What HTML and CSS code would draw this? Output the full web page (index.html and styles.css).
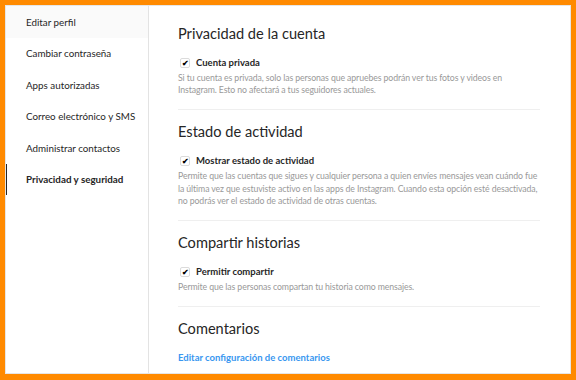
FILE: index.html
```html
<!DOCTYPE html>
<html lang="es">
<head>
<meta charset="utf-8">
<title>Privacidad y seguridad</title>
<link rel="stylesheet" href="styles.css">
</head>
<body>
<div class="frame">
  <div class="box">
    <nav class="side">
      <a class="item hover">Editar perfil</a>
      <a class="item">Cambiar contraseña</a>
      <a class="item">Apps autorizadas</a>
      <a class="item">Correo electrónico y SMS</a>
      <a class="item">Administrar contactos</a>
      <a class="item active">Privacidad y seguridad</a>
    </nav>
    <main class="main">
      <section class="sec">
        <h2 class="title">Privacidad de la cuenta</h2>
        <label class="check"><span class="box-check">✔</span>Cuenta privada</label>
        <p class="desc">Si tu cuenta es privada, solo las personas que apruebes podrán ver tus fotos y videos en Instagram. Esto no afectará a tus seguidores actuales.</p>
      </section>
      <section class="sec">
        <h2 class="title">Estado de actividad</h2>
        <label class="check"><span class="box-check">✔</span>Mostrar estado de actividad</label>
        <p class="desc">Permite que las cuentas que sigues y cualquier persona a quien envíes mensajes vean cuándo fue la última vez que estuviste activo en las apps de Instagram. Cuando esta opción esté desactivada, no podrás ver el estado de actividad de otras cuentas.</p>
      </section>
      <section class="sec">
        <h2 class="title">Compartir historias</h2>
        <label class="check"><span class="box-check">✔</span>Permitir compartir</label>
        <p class="desc">Permite que las personas compartan tu historia como mensajes.</p>
      </section>
      <section class="sec last">
        <h2 class="title">Comentarios</h2>
        <a class="link">Editar configuración de comentarios</a>
      </section>
    </main>
  </div>
</div>
</body>
</html>
```
FILE: styles.css
```css
* { box-sizing: border-box; }
html, body { margin: 0; padding: 0; }
body {
  background: #ff8a00;
  font-family: Lato, "Open Sans", sans-serif;
  color: #262626;
}
.frame {
  width: 576px;
  height: 380px;
  padding: 5px 5px 6px 5px;
}
.box {
  width: 566px;
  height: 369px;
  background: #fff;
  border: 1px solid #e6e6e6;
  display: flex;
  overflow: hidden;
}
.side {
  width: 143px;
  flex: none;
  border-right: 1px solid #e3e3e3;
  display: flex;
  flex-direction: column;
}
.item {
  display: flex;
  align-items: center;
  height: 31.5px;
  padding-left: 19px;
  font-size: 9.8px;
  white-space: nowrap;
  color: #262626;
  border-left: 2px solid transparent;
  margin-left: -1px;
}
.item.hover { background: #fafafa; }
.item.active {
  border-left-color: #262626;
  font-weight: 700;
}
.main {
  flex: 1;
  padding: 18px 30px 0 29px;
}
.sec {
  border-bottom: 1px solid #efefef;
  padding-bottom: 12.5px;
  margin-bottom: 12.5px;
}
.sec.last { border-bottom: none; }
.title {
  margin: 0;
  font-size: 14.6px;
  font-weight: 400;
  line-height: 20px;
  color: #262626;
}
.check {
  display: flex;
  align-items: center;
  margin-top: 11.5px;
  height: 14px;
  font-size: 9.5px;
  font-weight: 700;
  color: #262626;
}
.box-check {
  width: 10px;
  height: 10px;
  border: 1px solid #dbdbdb;
  border-radius: 2px;
  margin: 0 6px 0 2px;
  display: flex;
  align-items: center;
  justify-content: center;
  font-size: 8px;
  line-height: 1;
  color: #000;
}
.desc {
  margin: 2.5px 0 0;
  font-size: 8.72px;
  line-height: 12.2px;
  letter-spacing: -0.1px;
  color: #999;
}
.link {
  display: block;
  margin-top: 13px;
  font-size: 9.5px;
  font-weight: 700;
  color: #3897f0;
}
```
